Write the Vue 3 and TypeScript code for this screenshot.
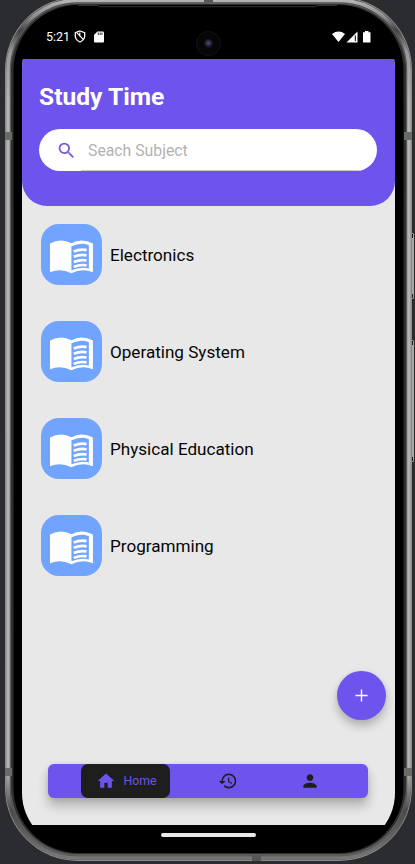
<script setup lang="ts">
interface Subject {
  id: number
  name: string
}

const subjects: Subject[] = [
  { id: 1, name: 'Electronics' },
  { id: 2, name: 'Operating System' },
  { id: 3, name: 'Physical Education' },
  { id: 4, name: 'Programming' },
]
</script>

<template>
  <div class="stage">
    <svg class="bezel" viewBox="0 0 415 864" aria-hidden="true">
      <defs>
        <linearGradient id="metal" x1="0" y1="0" x2="0" y2="1">
          <stop offset="0" stop-color="#b4b4b4" />
          <stop offset="0.02" stop-color="#8c8c8c" />
          <stop offset="0.035" stop-color="#444" />
          <stop offset="0.06" stop-color="#999" />
          <stop offset="0.12" stop-color="#b4b4b4" />
          <stop offset="0.9" stop-color="#b0b0b0" />
          <stop offset="0.945" stop-color="#4a4a4a" />
          <stop offset="1" stop-color="#777" />
        </linearGradient>
      </defs>
      <path d="M411 233h1.500q1.500 0 1.500 2v62q0 2-1.500 2H411zM411 340h1.500q1.500 0 1.500 2v118q0 2-1.500 2H411z" fill="#a5a5a5" />
      <path d="M412 234v4M412 294v4M412 341v4M412 457v4" stroke="#191919" stroke-width="2" />
      <rect x="5" y="-3" width="407" height="864" rx="73" fill="#8b8d8d" />
      <rect x="6" y="-2" width="405" height="862" rx="72" fill="#4c4c4c" />
      <rect x="8" y="0.500" width="401" height="857.500" rx="70" fill="none" stroke="url(#metal)" stroke-width="3.600" />
      <rect x="10" y="3" width="397" height="853" rx="68" fill="#5c5c5c" />
      <rect x="11" y="4" width="395" height="850" rx="67" fill="#2f2f30" />
      <rect x="13.500" y="5" width="390" height="848" rx="65" fill="#000" />
      <path d="M78 5.500h19l3 1.200H314l5-1.200h18" fill="none" stroke="#383838" stroke-width="0.900" />
      <path d="M5 132h7v8H5zM404 132h8v8h-8zM5 768h7v8H5zM404 768h8v8h-8z" fill="#686c68" />
      <path d="M204 0h9v3h-9zM252 855h9v6h-9z" fill="#555855" />
    </svg>

    <main class="screen">
      <div class="statusbar">
        <span class="clock">5:21</span>
        <svg class="shield" viewBox="0 0 12 13">
          <path d="M6 1L10.700 2.700V6.300Q10.500 10 6 12Q1.500 10 1.300 6.300V2.700Z" fill="none" stroke="#fff" stroke-width="1.300" />
          <path d="M3 2.900L9.500 9.600M5.800 2.500V6.500" stroke="#fff" stroke-width="1.200" />
        </svg>
        <svg class="sdcard" viewBox="0 0 10 12">
          <path d="M3.400 .5H8.800Q10 .5 10 1.700V10.500Q10 11.500 9 11.500H1Q0 11.500 0 10.500V4Z" fill="#fff" />
          <path d="M4.300 1.500V4M6.200 1.500V4M8 1.500V4" stroke="#000" stroke-width=".8" />
        </svg>
        <span class="camera"></span>
        <svg class="signals" viewBox="0 0 40 12">
          <path d="M0 2.900Q6.500-1.800 13 2.900L6.500 11Z" fill="#fff" />
          <path d="M14.500 11.500L25.500 .5V11.500Z" fill="#fff" />
          <path d="M23.300 4.500V10.200" stroke="#000" stroke-width="1" />
          <path d="M33 0h3.500v1.300H38.500V11.500H31V1.300h2z" fill="#fff" />
        </svg>
      </div>

      <div class="app">
        <header class="header">
          <h1>Study Time</h1>
          <label class="search">
            <svg viewBox="0 0 24 24">
              <path d="M15.500 14h-.79l-.28-.27A6.471 6.471 0 0 0 16 9.500 6.500 6.500 0 1 0 9.500 16c1.610 0 3.090-.59 4.230-1.570l.27.28v.79l5 4.990L20.490 19l-4.990-5zm-6 0C7.010 14 5 11.990 5 9.500S7.010 5 9.500 5 14 7.010 14 9.500 11.990 14 9.500 14z" fill="#8156d6" />
            </svg>
            <span class="field"><input type="text" placeholder="Seach Subject" /></span>
          </label>
        </header>

        <ul class="subjects">
          <li v-for="subject in subjects" :key="subject.id">
            <span class="book">
              <svg viewBox="0 0 44 34">
                <path d="M0 3.300Q11-2.500 21.700 3Q32-2.500 43.400 3.300V32.300Q32 28 21.700 33.500Q11 28 0 32.300Z" fill="#fff" />
                <path d="M21.700 6.200Q31 1.800 39.300 5V28.700Q31 26.200 21.700 30.500Z" fill="#70a4ff" />
                <path d="M24 11.500Q30.500 8.700 37 10M24 16.800Q30.500 14 37 15.300M24 22.100Q30.500 19.300 37 20.600M24 27Q30.500 24.200 37 25.500" fill="none" stroke="#fff" stroke-width="2.700" />
              </svg>
            </span>
            <span>{{ subject.name }}</span>
          </li>
        </ul>

        <button class="fab" aria-label="Add">
          <svg viewBox="0 0 14 14"><path d="M7 .5V13.500M.5 7H13.500" stroke="#fff" stroke-width="1.500" /></svg>
        </button>

        <nav class="tabs">
          <a class="tab active">
            <svg viewBox="0 0 24 24"><path d="M10 20v-6h4v6h5v-8h3L12 3 2 12h3v8z" /></svg>
            <span>Home</span>
          </a>
          <a class="tab history">
            <svg viewBox="0 0 24 24"><path d="M13 3a9 9 0 0 0-9 9H1l3.890 3.890.07.14L9 12H6c0-3.870 3.130-7 7-7s7 3.130 7 7-3.130 7-7 7c-1.930 0-3.680-.79-4.940-2.060l-1.420 1.420A8.954 8.954 0 0 0 13 21a9 9 0 0 0 0-18zm-1 5v5l4.280 2.540.72-1.210-3.500-2.080V8H12z" /></svg>
          </a>
          <a class="tab person">
            <svg viewBox="0 0 24 24"><path d="M12 12c2.210 0 4-1.790 4-4s-1.790-4-4-4-4 1.790-4 4 1.790 4 4 4zm0 2c-2.670 0-8 1.340-8 4v2h16v-2c0-2.660-5.330-4-8-4z" /></svg>
          </a>
        </nav>
      </div>

      <footer class="gesture"><span></span></footer>
    </main>
  </div>
</template>

<style>
body {
  background: #2b2c30;
}
</style>

<style scoped>
.stage {
  position: relative;
  box-sizing: border-box;
  width: 415px;
  height: 864px;
  padding: 14px 20px 16px 22px;
  overflow: hidden;
  background: #2b2c30;
  font-family: Roboto, sans-serif;
}
.bezel {
  position: absolute;
  inset: 0;
  width: 415px;
  height: 864px;
}
.screen {
  position: relative;
  display: flex;
  flex-direction: column;
  width: 373px;
  height: 834px;
  border-radius: 55px;
  overflow: hidden;
  background: #000;
}
.statusbar {
  flex: none;
  display: flex;
  align-items: center;
  box-sizing: border-box;
  height: 45px;
  padding: 0 23px 0 24px;
  color: #fff;
}
.clock {
  width: 28px;
  font-size: 12.500px;
  line-height: 15px;
}
.shield {
  width: 12px;
  height: 13px;
}
.sdcard {
  width: 10px;
  height: 12px;
  margin-left: 8px;
}
.camera {
  width: 9px;
  height: 9px;
  margin: 14px 0 0 92px;
  border: 8px solid #060606;
  outline: 1.500px solid #131313;
  outline-offset: -1px;
  border-radius: 50%;
  background: radial-gradient(circle at 50% 45%, #47446b 0 12%, #1c1c32 45%, #111 75%);
}
.signals {
  width: 40px;
  height: 12px;
  margin-left: auto;
}
.app {
  flex: none;
  display: flex;
  flex-direction: column;
  height: 766px;
  background: #e8e8e8;
}
.header {
  flex: none;
  box-sizing: border-box;
  height: 147px;
  padding: 23px 18px 0 17px;
  background: #6e54ec;
  border-radius: 0 0 25px 25px;
}
h1 {
  margin: 0 0 17px;
  font-size: 24.600px;
  font-weight: 700;
  line-height: 30px;
  color: #fff;
}
.search {
  display: flex;
  align-items: center;
  height: 42px;
  padding-left: 17px;
  border-radius: 21px;
  background: #fff;
  overflow: hidden;
}
.search svg {
  flex: none;
  width: 21px;
  height: 21px;
}
.field {
  display: flex;
  flex: 1;
  height: 41px;
  margin: 0 8px 0 4px;
  border-bottom: 1px solid #c9c7d0;
}
input {
  flex: 1;
  min-width: 0;
  padding: 2px 0 0 7px;
  border: 0;
  outline: 0;
  background: transparent;
  font: 15.800px Roboto, sans-serif;
}
input::placeholder {
  color: #b2b2b2;
}
.subjects {
  display: flex;
  flex-direction: column;
  gap: 36px;
  margin: 0;
  padding: 18px 0 0 19px;
  list-style: none;
}
.subjects li {
  display: flex;
  align-items: center;
  gap: 8px;
  height: 61px;
  color: #050505;
  font-size: 17.100px;
}
.subjects li > span:last-child {
  padding-top: 1px;
}
.book {
  display: flex;
  align-items: center;
  justify-content: center;
  width: 61px;
  height: 61px;
  border-radius: 18px;
  background: #70a4ff;
}
.book svg {
  width: 43.500px;
  height: 34px;
  margin: 4px 0 0 1px;
}
.fab {
  display: flex;
  align-items: center;
  justify-content: center;
  align-self: flex-end;
  width: 49px;
  height: 49px;
  margin: 95px 9px 0 0;
  padding: 0;
  border: 0;
  border-radius: 50%;
  background: #6e54ec;
  box-shadow: 0 6px 10px rgba(0, 0, 0, 0.24), 0 0 5px rgba(0, 0, 0, 0.05);
}
.fab svg {
  width: 13px;
  height: 13px;
}
.tabs {
  display: flex;
  align-items: center;
  height: 34px;
  margin: 44px 27px 0 26px;
  padding-left: 33px;
  border-radius: 6px;
  background: #6e54ec;
  box-shadow: 0 8px 12px rgba(0, 0, 0, 0.24), 0 1px 5px rgba(0, 0, 0, 0.1);
}
.tab {
  display: flex;
  align-items: center;
}
.tab svg {
  width: 20px;
  height: 20px;
  fill: #1e1e1e;
}
.active {
  box-sizing: border-box;
  width: 89px;
  height: 34px;
  padding-left: 15px;
  gap: 7.500px;
  border-radius: 7px;
  background: #1e1e1e;
  color: #6e54ec;
  font-size: 12.300px;
}
.active svg {
  fill: #6e54ec;
}
.history {
  margin-left: 48px;
}
.person {
  margin-left: 62px;
}
.gesture {
  flex: none;
  display: flex;
  justify-content: center;
  height: 23px;
  padding-top: 8px;
  box-sizing: border-box;
  background: #000;
}
.gesture span {
  width: 95px;
  height: 4px;
  border-radius: 2px;
  background: #e8e8e8;
}
</style>
